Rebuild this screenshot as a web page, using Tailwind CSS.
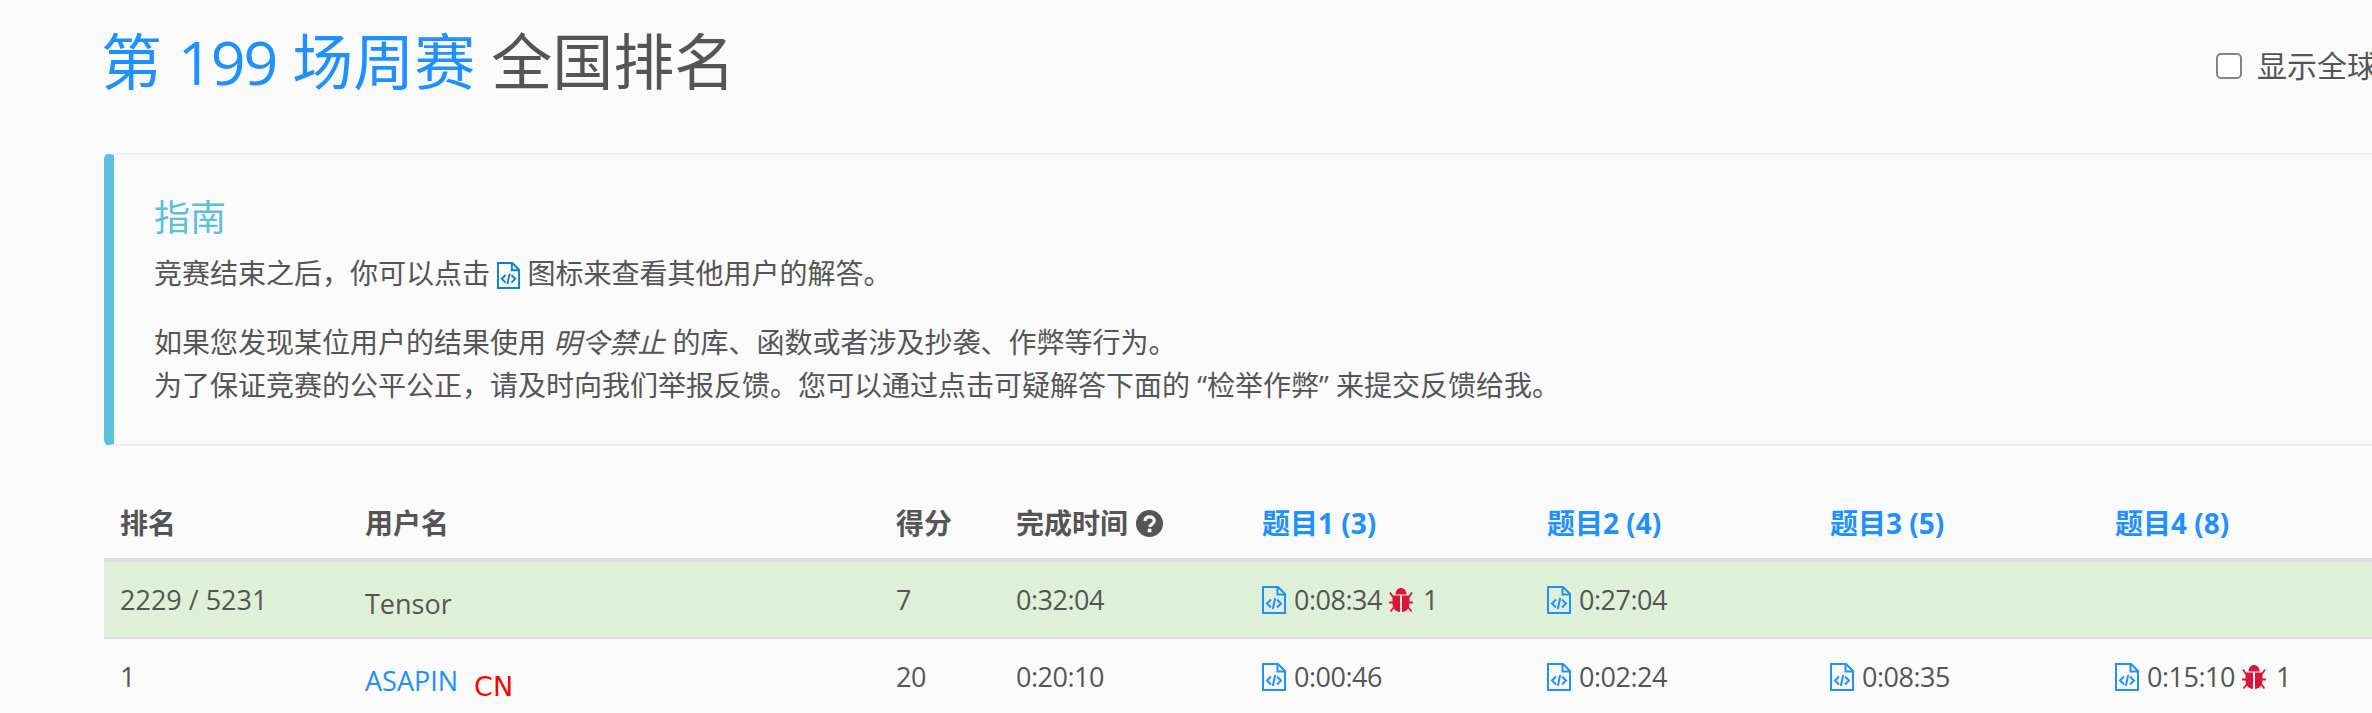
<!DOCTYPE html>
<html lang="zh-CN">
<head>
  <meta charset="UTF-8" />
  <meta name="viewport" content="width=device-width, initial-scale=1" />
  <title>第 199 场周赛 全国排名</title>
  <script src="https://cdn.jsdelivr.net/npm/@tailwindcss/browser@4"></script>
</head>
<body class="bg-[#fafafa] h-[713px] overflow-hidden text-[#555] text-[28px] leading-[43px] font-['Open_Sans','Noto_Sans_CJK_SC',sans-serif]">
  <div class="w-[2800px] pl-[104px]">

    <!-- title -->
    <div class="flex items-center h-[66px] mt-[29px] w-[2333px]">
      <h1 class="-ml-[3px] text-[61px] leading-[66px] font-normal whitespace-nowrap">
        <span class="text-[#1e90ff]">第 <span class="tracking-[-2px]">199</span> 场周赛</span> 全国排名
      </h1>
      <label class="ml-auto mt-[7px] flex items-center whitespace-nowrap text-[30px]">
        <span class="w-[26px] h-[26px] bg-white border-2 border-[#858585] rounded-[5px] mr-[15px]"></span>
        显示全球排名
      </label>
    </div>

    <!-- guide -->
    <div class="mt-[58px] h-[293px] border-2 border-[#eee] border-l-[10px] border-l-[#5bc0de] rounded-[6px] pt-[43px] pl-[40px]">
      <h4 class="text-[36px] leading-[40px] text-[#5bc0de] mb-[14px]">指南</h4>
      <p class="mb-[26px]">竞赛结束之后，你可以点击
        <svg class="inline-block w-[23px] h-[27px] align-[-5px] text-[#0a84c9]" viewBox="0 0 24 28" fill="none" stroke="currentColor" stroke-width="2"><path d="M1 1h15l7 7v19H1z"/><path d="M15.5 1v7.5H23"/><path d="M9 13.5l-4 4 4 4M15 13.5l4 4-4 4M13.2 12l-2.400 11"/></svg>
        图标来查看其他用户的解答。</p>
      <p>如果您发现某位用户的结果使用 <em>明令禁止</em> 的库、函数或者涉及抄袭、作弊等行为。<br />为了保证竞赛的公平公正，请及时向我们举报反馈。您可以通过点击可疑解答下面的 “检举作弊” 来提交反馈给我。</p>
    </div>

    <!-- ranking -->
    <table class="mt-[37px] w-[2285px] table-fixed border-collapse">
      <colgroup>
        <col class="w-[245px]" /><col class="w-[531px]" /><col class="w-[120px]" /><col class="w-[246px]" /><col class="w-[285px]" /><col class="w-[283px]" /><col class="w-[285px]" /><col class="w-[290px]" />
      </colgroup>
      <thead>
        <tr class="border-b-[4px] border-[#ddd] text-left">
          <th class="px-4 pt-[19px] pb-[13px] font-bold">排名</th>
          <th class="px-4 pt-[19px] pb-[13px] font-bold">用户名</th>
          <th class="px-4 pt-[19px] pb-[13px] font-bold">得分</th>
          <th class="px-4 pt-[19px] pb-[13px] font-bold">
            <div class="flex items-center gap-[8px]">完成时间
              <svg class="w-[27px] h-[27px]" viewBox="0 0 26 26"><circle cx="13" cy="13" r="13" fill="#555"/><path d="M8.500 10.500c.4-2.600 2.200-3.900 4.600-3.900 2.600 0 4.500 1.500 4.500 3.800 0 3.200-4.300 3.300-4.300 6" fill="none" stroke="#fafafa" stroke-width="3"/><rect x="11.300" y="18" width="3.600" height="3.400" fill="#fafafa"/></svg>
            </div>
          </th>
          <th class="px-4 pt-[19px] pb-[13px] font-bold text-[#1e90ff]">题目1 (3)</th>
          <th class="px-4 pt-[19px] pb-[13px] font-bold text-[#1e90ff]">题目2 (4)</th>
          <th class="px-4 pt-[19px] pb-[13px] font-bold text-[#1e90ff]">题目3 (5)</th>
          <th class="px-4 pt-[19px] pb-[13px] font-bold text-[#1e90ff]">题目4 (8)</th>
        </tr>
      </thead>
      <tbody class="text-[27px] tracking-[-0.5px]">
        <tr class="h-[76px] bg-[#dff0d8] border-b-2 border-[#ddd]">
          <td class="p-4 align-top tracking-normal">2229 / 5231</td>
          <td class="pt-5 pb-3 px-4 align-top tracking-normal">Tensor</td>
          <td class="p-4 align-top">7</td>
          <td class="p-4 align-top">0:32:04</td>
          <td class="p-4 align-top">
            <div class="flex items-center">
              <svg class="w-[24px] h-[28px] mr-[8px]" viewBox="0 0 24 28" fill="none" stroke="#1e90ff" stroke-width="2"><path d="M1 1h15l7 7v19H1z"/><path d="M15.500 1v7.500H23"/><path d="M9 13.500l-4 4 4 4M15 13.500l4 4-4 4M13.200 12l-2.400 11"/></svg>
              0:08:34
              <svg class="w-[24px] h-[26px] ml-[7px] mr-[10px]" viewBox="0 0 24 26" fill="#dc143c" stroke="#dc143c"><path stroke="none" d="M6.500 7.500C6.500 3.500 9 1 12 1s5.500 2.500 5.500 6.500z"/><path stroke="none" d="M3.500 8.500h7.500V25C6.500 25 3.500 21 3.500 16zM13 8.500h7.500V16c0 5-3 9-7.500 9z"/><path fill="none" stroke-width="1.800" d="M4 10L1 5.500M20 10l3-4.500M4 15.500H0M20 15.500h4M5 20l-3.500 4.500M19 20l3.500 4.500"/></svg>
              1
            </div>
          </td>
          <td class="p-4 align-top">
            <div class="flex items-center">
              <svg class="w-[24px] h-[28px] mr-[8px]" viewBox="0 0 24 28" fill="none" stroke="#1e90ff" stroke-width="2"><path d="M1 1h15l7 7v19H1z"/><path d="M15.500 1v7.500H23"/><path d="M9 13.500l-4 4 4 4M15 13.500l4 4-4 4M13.200 12l-2.400 11"/></svg>
              0:27:04
            </div>
          </td>
          <td class="p-4"></td>
          <td class="p-4"></td>
        </tr>
        <tr>
          <td class="p-4 align-top">1</td>
          <td class="pt-5 pb-3 px-4 align-top whitespace-nowrap tracking-normal"><a class="text-[#1e90ff]" href="#">ASAPIN</a><span class="inline-block ml-[16px] text-[27px] text-[#f00] align-[-5px] font-['DejaVu_Sans',sans-serif]">CN</span></td>
          <td class="p-4 align-top">20</td>
          <td class="p-4 align-top">0:20:10</td>
          <td class="p-4 align-top">
            <div class="flex items-center">
              <svg class="w-[24px] h-[28px] mr-[8px]" viewBox="0 0 24 28" fill="none" stroke="#1e90ff" stroke-width="2"><path d="M1 1h15l7 7v19H1z"/><path d="M15.500 1v7.500H23"/><path d="M9 13.500l-4 4 4 4M15 13.500l4 4-4 4M13.200 12l-2.400 11"/></svg>
              0:00:46
            </div>
          </td>
          <td class="p-4 align-top">
            <div class="flex items-center">
              <svg class="w-[24px] h-[28px] mr-[8px]" viewBox="0 0 24 28" fill="none" stroke="#1e90ff" stroke-width="2"><path d="M1 1h15l7 7v19H1z"/><path d="M15.500 1v7.500H23"/><path d="M9 13.500l-4 4 4 4M15 13.500l4 4-4 4M13.200 12l-2.400 11"/></svg>
              0:02:24
            </div>
          </td>
          <td class="p-4 align-top">
            <div class="flex items-center">
              <svg class="w-[24px] h-[28px] mr-[8px]" viewBox="0 0 24 28" fill="none" stroke="#1e90ff" stroke-width="2"><path d="M1 1h15l7 7v19H1z"/><path d="M15.500 1v7.500H23"/><path d="M9 13.500l-4 4 4 4M15 13.500l4 4-4 4M13.200 12l-2.400 11"/></svg>
              0:08:35
            </div>
          </td>
          <td class="p-4 align-top">
            <div class="flex items-center">
              <svg class="w-[24px] h-[28px] mr-[8px]" viewBox="0 0 24 28" fill="none" stroke="#1e90ff" stroke-width="2"><path d="M1 1h15l7 7v19H1z"/><path d="M15.500 1v7.500H23"/><path d="M9 13.500l-4 4 4 4M15 13.500l4 4-4 4M13.200 12l-2.400 11"/></svg>
              0:15:10
              <svg class="w-[24px] h-[26px] ml-[7px] mr-[10px]" viewBox="0 0 24 26" fill="#dc143c" stroke="#dc143c"><path stroke="none" d="M6.500 7.500C6.500 3.500 9 1 12 1s5.500 2.500 5.500 6.500z"/><path stroke="none" d="M3.500 8.500h7.500V25C6.500 25 3.500 21 3.500 16zM13 8.500h7.500V16c0 5-3 9-7.500 9z"/><path fill="none" stroke-width="1.800" d="M4 10L1 5.500M20 10l3-4.500M4 15.500H0M20 15.500h4M5 20l-3.500 4.500M19 20l3.500 4.500"/></svg>
              1
            </div>
          </td>
        </tr>
      </tbody>
    </table>
  </div>
</body>
</html>
